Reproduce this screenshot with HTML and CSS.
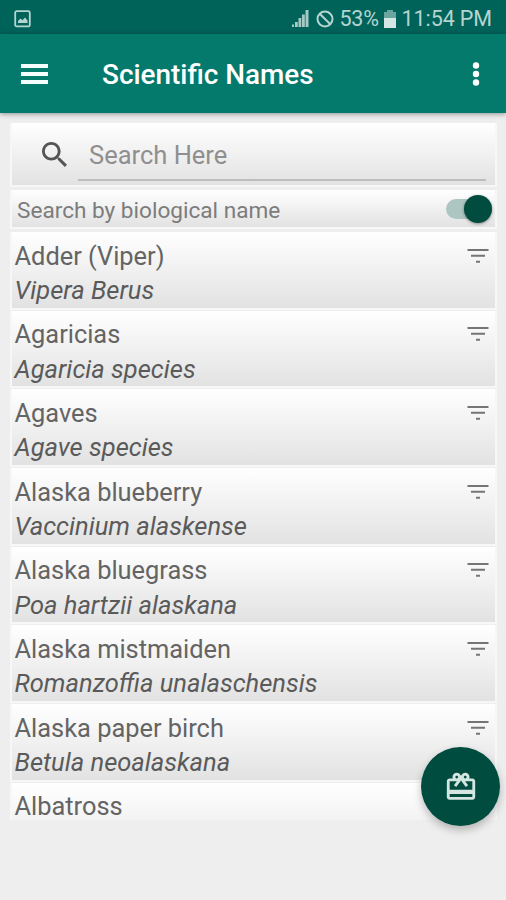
FILE: index.html
```html
<!DOCTYPE html>
<html lang="en">
<head>
    <meta charset="UTF-8">
    <meta name="viewport" content="width=device-width, initial-scale=1.0">
    <title>Scientific Names</title>
    <link rel="stylesheet" href="styles.css">
</head>
<body>
    <svg class="sprite">
        <symbol id="filter" viewBox="0 0 24 24">
            <path d="M10.300 17.700h3.400v-1.700h-3.400zM3 6v1.800h18V6H3zm3 6.700h12v-1.700H6z"/>
        </symbol>
    </svg>

    <div class="status-bar">
        <svg class="status-image" viewBox="0 0 18 18">
            <rect x="1.2" y="1.2" width="14.6" height="15.2" rx="1.5" fill="none" stroke="currentColor" stroke-width="1.8"/>
            <path d="M4 13V11l2.5-2.5 2 1.8L11 7.5l2.5 3V13z" fill="currentColor"/>
        </svg>
        <div class="status-right">
            <svg class="signal" viewBox="0 0 17 17">
                <path d="M0 14.500h2V17H0zM3 12h2.800v5H3zM6.500 8h2.800v9H6.500zM10 4.500h2.800V17H10zM13.500 0h3v17h-3z"/>
            </svg>
            <svg class="blocked" viewBox="0 0 18 18">
                <circle cx="9" cy="9" r="7.500"/>
                <path d="M3.700 3.700l10.600 10.600"/>
            </svg>
            <span class="percent">53%</span>
            <svg class="battery" viewBox="0 0 12 18">
                <path d="M3 0h6v2h3v7H0V2h3z" opacity=".5"/>
                <path d="M0 8h12v10H0z"/>
            </svg>
            <span class="clock">11:54 PM</span>
        </div>
    </div>

    <header class="toolbar">
        <svg class="menu-icon" viewBox="0 0 27 20">
            <path d="M0 0h27v4H0zM0 8h27v4H0zM0 16h27v4H0z"/>
        </svg>
        <h1>Scientific Names</h1>
        <svg class="more-icon" viewBox="0 0 8 24">
            <circle cx="4" cy="3.500" r="3.200"/>
            <circle cx="4" cy="12" r="3.200"/>
            <circle cx="4" cy="20.500" r="3.200"/>
        </svg>
    </header>

    <main class="content">
        <div class="card search">
            <svg class="search-icon" viewBox="3 3 17.490 17.490">
                <path d="M15.500 14h-.79l-.28-.27C15.410 12.590 16 11.110 16 9.500 16 5.910 13.090 3 9.500 3S3 5.910 3 9.500 5.910 16 9.500 16c1.610 0 3.090-.59 4.230-1.570l.27.28v.79l5 4.990L20.490 19l-4.990-5zm-6 0C7.010 14 5 11.990 5 9.500S7.010 5 9.500 5 14 7.010 14 9.500 11.990 14 9.500 14z"/>
            </svg>
            <div class="search-field"><span>Search Here</span></div>
        </div>
        <div class="card option">
            <span class="option-label">Search by biological name</span>
            <div class="switch"><div class="thumb"></div></div>
        </div>
        <div class="list">
            <div class="card item">
                <div class="name">Adder (Viper)</div>
                <div class="latin">Vipera Berus</div>
                <svg class="filter"><use href="#filter"/></svg>
            </div>
            <div class="card item">
                <div class="name">Agaricias</div>
                <div class="latin">Agaricia species</div>
                <svg class="filter"><use href="#filter"/></svg>
            </div>
            <div class="card item">
                <div class="name">Agaves</div>
                <div class="latin">Agave species</div>
                <svg class="filter"><use href="#filter"/></svg>
            </div>
            <div class="card item">
                <div class="name">Alaska blueberry</div>
                <div class="latin">Vaccinium alaskense</div>
                <svg class="filter"><use href="#filter"/></svg>
            </div>
            <div class="card item">
                <div class="name">Alaska bluegrass</div>
                <div class="latin">Poa hartzii alaskana</div>
                <svg class="filter"><use href="#filter"/></svg>
            </div>
            <div class="card item">
                <div class="name">Alaska mistmaiden</div>
                <div class="latin">Romanzoffia unalaschensis</div>
                <svg class="filter"><use href="#filter"/></svg>
            </div>
            <div class="card item">
                <div class="name">Alaska paper birch</div>
                <div class="latin">Betula neoalaskana</div>
                <svg class="filter"><use href="#filter"/></svg>
            </div>
            <div class="card item item-last">
                <div class="name">Albatross</div>
            </div>
        </div>
    </main>

    <div class="fab">
        <svg viewBox="0 0 24 24">
            <path d="M20 6h-2.180c.11-.31.180-.65.180-1 0-1.660-1.340-3-3-3-1.050 0-1.960.54-2.500 1.350l-.5.670-.5-.680C10.960 2.540 10.050 2 9 2 7.340 2 6 3.340 6 5c0 .35.070.69.180 1H4c-1.110 0-1.990.89-1.990 2L2 19c0 1.110.89 2 2 2h16c1.110 0 2-.89 2-2V8c0-1.110-.89-2-2-2zm-5-2c.55 0 1 .45 1 1s-.45 1-1 1-1-.45-1-1 .45-1 1-1zM9 4c.55 0 1 .45 1 1s-.45 1-1 1-1-.45-1-1 .45-1 1-1zm11 15H4v-2h16v2zm0-5H4V8h5.080L7 10.830 8.620 12 11 8.760l1-1.360 1 1.360L15.380 12 17 10.830 14.920 8H20v6z"/>
        </svg>
    </div>
</body>
</html>
```
FILE: styles.css
```css
body {
    margin: 0;
    height: 900px;
    overflow: hidden;
    background-color: #eeeeee;
    font-family: Roboto, sans-serif;
    color: #646464;
}
.sprite {
    display: none;
}
.status-bar {
    height: 34px;
    box-sizing: border-box;
    padding: 3px 14px 0 14px;
    display: flex;
    align-items: center;
    justify-content: space-between;
    background-color: #00635a;
    color: #b5d4d0;
    font-size: 21.500px;
}
.status-image {
    width: 18px;
    height: 18px;
}
.status-right {
    display: flex;
    align-items: center;
}
.signal {
    width: 17px;
    height: 17px;
    fill: #a5c9c5;
}
.blocked {
    width: 18px;
    height: 18px;
    margin-left: 7px;
    fill: none;
    stroke: #b5d4d0;
    stroke-width: 2;
}
.percent {
    margin-left: 6px;
    letter-spacing: -0.3px;
}
.battery {
    width: 12px;
    height: 18px;
    margin: 0 6px 0 5px;
    fill: #d5e7e5;
}
.clock {
    letter-spacing: -0.1px;
}
.toolbar {
    position: relative;
    height: 79px;
    box-sizing: border-box;
    padding: 0 26px 0 21px;
    display: flex;
    align-items: center;
    background-color: #047a6d;
    box-shadow: 0 1px 5px rgba(0,0,0,0.4);
}
.menu-icon {
    width: 27px;
    height: 20px;
    fill: #f4fffd;
}
.toolbar h1 {
    flex: 1;
    margin: 2px 0 0 54px;
    font-size: 27.900px;
    font-weight: 500;
    color: white;
}
.more-icon {
    width: 8px;
    height: 24px;
    fill: white;
}
.content {
    height: 697px;
    margin-top: 10px;
    padding: 0 9px 0 10px;
    overflow: hidden;
}
.card {
    box-sizing: border-box;
    border: 2px solid #f7f7f7;
    border-top: 0;
    background: linear-gradient(#ffffff, #e2e2e2) padding-box;
}
.search {
    height: 64px;
    display: flex;
    align-items: center;
    padding: 0 9px 0 30px;
}
.search-icon {
    width: 25px;
    height: 25px;
    fill: #555555;
}
.search-field {
    flex: 1;
    height: 53px;
    margin-left: 11px;
    padding-left: 11px;
    box-sizing: border-box;
    border-bottom: 2px solid #bdbdbd;
    line-height: 55px;
    font-size: 25.500px;
    color: #8f8f8f;
}
.option {
    height: 39px;
    margin-top: 3px;
    padding: 0 3px 0 5px;
    display: flex;
    align-items: center;
    justify-content: space-between;
}
.option-label {
    margin-top: 3px;
    font-size: 22.600px;
    color: #7c7c7c;
}
.switch {
    width: 46px;
    height: 20px;
    margin-top: 1px;
    display: flex;
    align-items: center;
    justify-content: flex-end;
    border-radius: 10px;
    background-color: #adc6c1;
}
.thumb {
    width: 28px;
    height: 28px;
    flex: none;
    border-radius: 50%;
    background-color: #004d40;
    box-shadow: 0 1px 3px rgba(0,0,0,0.4);
}
.list {
    margin-top: 3px;
}
.item {
    height: 77.700px;
    margin-bottom: 1px;
    padding: 6.500px 5px 0 2.500px;
    display: grid;
    grid-template-columns: 1fr 26px;
    grid-template-rows: 34.500px 34.500px;
    line-height: 34.500px;
    font-size: 25.400px;
}
.item-last {
    height: 37px;
    padding-top: 9px;
    border-bottom: 0;
    background: linear-gradient(#ffffff, #f3f3f3) padding-box;
    grid-template-rows: 28px;
    line-height: 28px;
}
.latin {
    grid-row: 2;
    font-size: 25.500px;
    font-style: italic;
    color: #5a5a5a;
}
.filter {
    grid-column: 2;
    grid-row: 1;
    width: 28px;
    height: 28px;
    margin-top: 3px;
    fill: #757575;
}
.fab {
    position: absolute;
    left: 421px;
    top: 747px;
    width: 79px;
    height: 79px;
    display: flex;
    align-items: center;
    justify-content: center;
    border-radius: 50%;
    background-color: #004d40;
    box-shadow: 0 4px 8px rgba(0,0,0,0.25);
}
.fab svg {
    width: 34px;
    height: 34px;
    fill: #d4e6e1;
}
```
